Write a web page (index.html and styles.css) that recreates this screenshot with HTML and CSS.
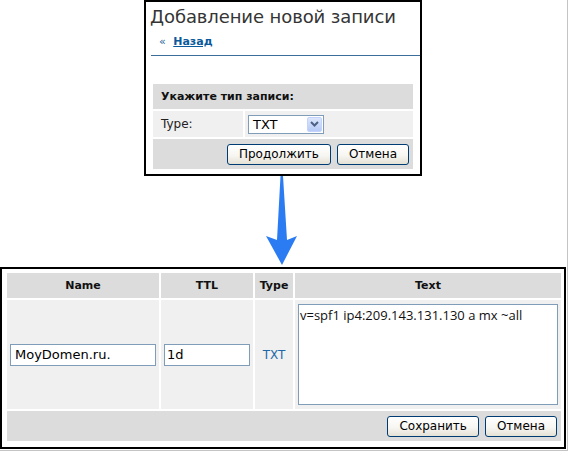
FILE: index.html
```html
<!DOCTYPE html>
<html lang="ru">
<head>
<meta charset="utf-8">
<title>Добавление новой записи</title>
<link rel="stylesheet" href="styles.css">
</head>
<body>
<div class="page">
  <div class="dialog">
    <div class="dlg-head">
      <h1 class="dlg-title">Добавление новой записи</h1>
      <div class="back"><span class="laquo">«</span> <a href="#" class="back-link">Назад</a></div>
    </div>
    <table class="type-form">
      <tr><th colspan="2" class="form-head">Укажите тип записи:</th></tr>
      <tr>
        <td class="label-cell">Type:</td>
        <td class="value-cell">
          <div class="select">
            <span class="select-value">TXT</span>
            <span class="select-btn"><svg class="chev" width="9" height="6" viewBox="0 0 9 6"><path d="M1 1 L4.5 4.5 L8 1" fill="none" stroke="#4d6185" stroke-width="2"/></svg></span>
          </div>
        </td>
      </tr>
      <tr><td colspan="2" class="form-foot"><button class="btn">Продолжить</button><button class="btn">Отмена</button></td></tr>
    </table>
  </div>
  <div class="arrow">
    <svg class="arrow-svg" width="36" height="91" viewBox="0 0 36 91"><polygon points="16.5,0 19,0 23,64 33,60 18,89 2,60 13,64" fill="#2b7cf3"/></svg>
  </div>
  <div class="records">
    <table class="rec-table">
      <tr>
        <th class="rec-th col-name">Name</th>
        <th class="rec-th col-ttl">TTL</th>
        <th class="rec-th col-type">Type</th>
        <th class="rec-th col-text">Text</th>
      </tr>
      <tr class="rec-row">
        <td class="rec-td"><input class="inp inp-name" value="MoyDomen.ru."></td>
        <td class="rec-td"><input class="inp" value="1d"></td>
        <td class="rec-td type-val">TXT</td>
        <td class="rec-td"><textarea class="txt">v=spf1 ip4:209.143.131.130 a mx ~all</textarea></td>
      </tr>
      <tr><td colspan="4" class="rec-foot"><button class="btn">Сохранить</button><button class="btn">Отмена</button></td></tr>
    </table>
  </div>
</div>
</body>
</html>
```
FILE: styles.css
```css
body {
  margin: 0;
  background: #fff;
  font-family: "DejaVu Sans", sans-serif;
  color: #000;
}
.page {
  width: 567px;
  height: 450px;
  border-right: 1px solid #c4c4c4;
  border-bottom: 1px solid #c4c4c4;
}
.dialog {
  margin-left: 144px;
  width: 274px;
  height: 172px;
  border: 2px solid #000;
}
.dlg-head {
  margin-left: 5px;
  padding-bottom: 6px;
  border-bottom: 1px solid #3d6e99;
}
.dlg-title {
  margin: 0 0 0 -1px;
  padding-top: 3px;
  font-family: "DejaVu Sans", sans-serif;
  font-weight: normal;
  font-size: 18px;
  line-height: 24px;
  color: #353535;
  white-space: nowrap;
  letter-spacing: -0.1px;
}
.back {
  margin-top: 6px;
  padding-left: 8px;
  font-size: 11px;
  line-height: 14px;
}
.laquo {
  margin-right: 4px;
  color: #1d5e98;
}
.back-link {
  color: #0a5a9c;
  font-weight: bold;
  text-decoration: underline;
}
.type-form {
  margin: 26px 5px 0;
  width: 264px;
  border-collapse: separate;
  border-spacing: 2px;
}
.form-head {
  height: 25px;
  padding: 0 0 0 8px;
  background: #dcdcdc;
  text-align: left;
  font-size: 11px;
  font-weight: bold;
  color: #111;
}
.label-cell {
  width: 82px;
  height: 26px;
  padding: 0 0 0 8px;
  background: #f0f0f0;
  font-size: 12px;
  color: #222;
}
.value-cell {
  padding: 0 0 0 3px;
  background: #f0f0f0;
}
.select {
  display: flex;
  align-items: center;
  box-sizing: border-box;
  width: 76px;
  height: 19px;
  border: 1px solid #7f9db9;
  background: #fff;
}
.select-value {
  flex: 1;
  padding-left: 4px;
  font-size: 13px;
  line-height: 17px;
}
.select-btn {
  display: flex;
  align-items: center;
  justify-content: center;
  box-sizing: border-box;
  width: 15px;
  height: 15px;
  margin-right: 1px;
  border: 1px solid #c3d3fd;
  border-radius: 2px;
  background: linear-gradient(#dce6fc, #b7cbf6);
}
.chev {
  display: block;
}
.form-foot {
  height: 30px;
  padding: 0 4px 0 0;
  background: #dcdcdc;
  text-align: right;
}
.btn {
  height: 21px;
  margin: 0 0 0 6px;
  padding: 0 11px;
  border: 1px solid #003c74;
  border-radius: 3px;
  background: linear-gradient(#ffffff 0%, #f7f6f2 55%, #e4e1d5 100%);
  font-family: "DejaVu Sans", sans-serif;
  font-size: 12px;
  color: #000;
  vertical-align: middle;
}
.arrow {
  height: 91px;
  padding-left: 264px;
}
.arrow-svg {
  display: block;
}
.records {
  width: 558px;
  height: 172px;
  padding: 2px 1px 4px 3px;
  border: 2px solid #000;
}
.rec-table {
  width: 558px;
  table-layout: fixed;
  border-collapse: separate;
  border-spacing: 2px;
}
.rec-th {
  height: 25px;
  padding: 0;
  background: #dcdcdc;
  text-align: center;
  font-size: 11px;
  font-weight: bold;
  color: #111;
}
.col-name { width: 152px; }
.col-ttl { width: 92px; }
.col-type { width: 38px; }
.col-text { width: 266px; }
.rec-td {
  height: 109px;
  padding: 0 3px;
  background: #f0f0f0;
  vertical-align: middle;
}
.inp {
  display: block;
  box-sizing: border-box;
  width: 100%;
  height: 22px;
  margin: 0;
  padding: 0 2px;
  border: 1px solid #7f9db9;
  background: #fff;
  font-family: "DejaVu Sans", sans-serif;
  font-size: 13px;
  color: #000;
}
.inp-name {
  padding-left: 4px;
}
.type-val {
  padding: 0;
  text-align: center;
  font-size: 12px;
  color: #1f68a8;
}
.txt {
  display: block;
  box-sizing: border-box;
  width: 100%;
  height: 101px;
  margin: 0;
  padding: 1px;
  border: 1px solid #7f9db9;
  resize: none;
  font-family: "Open Sans", sans-serif;
  font-size: 13px;
  color: #111;
  background: #fff;
}
.rec-foot {
  height: 30px;
  padding: 0 4px 0 0;
  background: #dcdcdc;
  text-align: right;
}
```
